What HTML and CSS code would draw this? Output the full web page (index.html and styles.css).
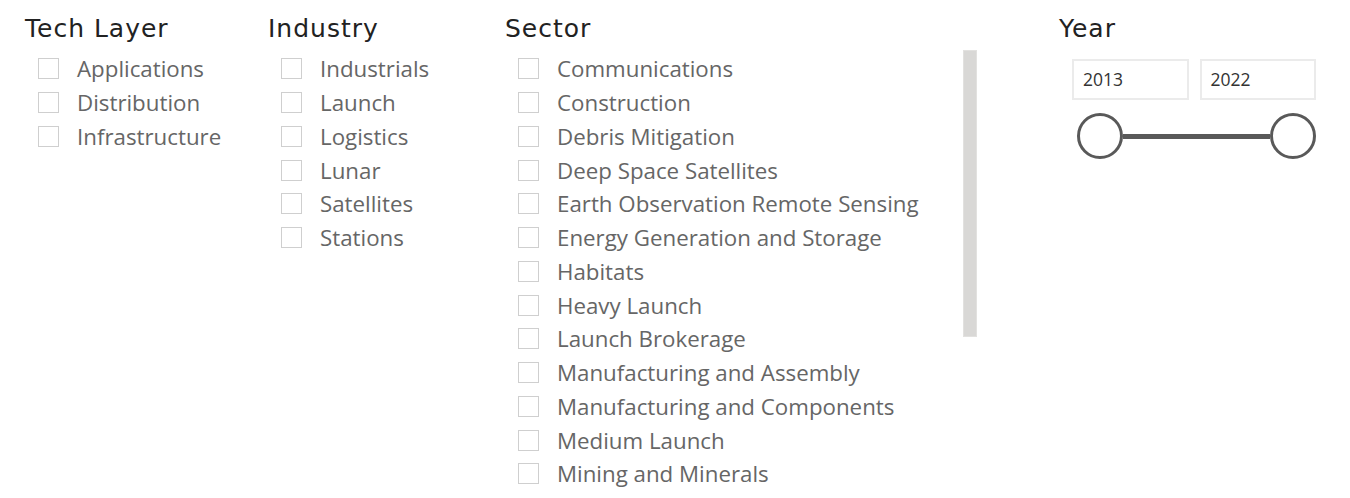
FILE: index.html
```html
<!DOCTYPE html>
<html>
<head>
<meta charset="utf-8">
<link rel="stylesheet" href="styles.css">
</head>
<body>
<div class="page">
  <section class="slicer tech">
    <h2 class="title">Tech Layer</h2>
    <ul class="items">
      <li><span class="box"></span>Applications</li>
      <li><span class="box"></span>Distribution</li>
      <li><span class="box"></span>Infrastructure</li>
    </ul>
  </section>
  <section class="slicer industry">
    <h2 class="title">Industry</h2>
    <ul class="items">
      <li><span class="box"></span>Industrials</li>
      <li><span class="box"></span>Launch</li>
      <li><span class="box"></span>Logistics</li>
      <li><span class="box"></span>Lunar</li>
      <li><span class="box"></span>Satellites</li>
      <li><span class="box"></span>Stations</li>
    </ul>
  </section>
  <section class="slicer sector">
    <h2 class="title">Sector</h2>
    <div class="scrollwrap">
      <ul class="items">
        <li><span class="box"></span>Communications</li>
        <li><span class="box"></span>Construction</li>
        <li><span class="box"></span>Debris Mitigation</li>
        <li><span class="box"></span>Deep Space Satellites</li>
        <li><span class="box"></span>Earth Observation Remote Sensing</li>
        <li><span class="box"></span>Energy Generation and Storage</li>
        <li><span class="box"></span>Habitats</li>
        <li><span class="box"></span>Heavy Launch</li>
        <li><span class="box"></span>Launch Brokerage</li>
        <li><span class="box"></span>Manufacturing and Assembly</li>
        <li><span class="box"></span>Manufacturing and Components</li>
        <li><span class="box"></span>Medium Launch</li>
        <li><span class="box"></span>Mining and Minerals</li>
      </ul>
      <div class="scrollbar"></div>
    </div>
  </section>
  <section class="slicer year">
    <h2 class="title">Year</h2>
    <div class="range">
      <div class="inputs">
        <div class="field">2013</div>
        <div class="field">2022</div>
      </div>
      <div class="track">
        <span class="knob"></span>
        <span class="bar"></span>
        <span class="knob"></span>
      </div>
    </div>
  </section>
</div>
</body>
</html>
```
FILE: styles.css
```css
html, body {
  margin: 0;
  padding: 0;
  background: #ffffff;
  overflow: hidden;
}
.page {
  display: flex;
  align-items: flex-start;
  height: 498px;
  overflow: hidden;
}
.title {
  margin: 0;
  font-family: "DejaVu Sans", sans-serif;
  font-weight: normal;
  font-size: 25px;
  letter-spacing: 1px;
  line-height: 30px;
  color: #222222;
  padding-top: 14px;
  height: 30px;
}
.items {
  list-style: none;
  margin: 0;
  padding: 0;
  font-family: "Open Sans", sans-serif;
  font-size: 22.3px;
  color: #666666;
}
.items li {
  display: flex;
  align-items: center;
  height: 33.75px;
  white-space: nowrap;
}
.box {
  width: 21px;
  height: 21px;
  border: 1px solid #cfcfcf;
  box-sizing: border-box;
  margin-right: 18px;
  flex: none;
}
.tech {
  margin-left: 25px;
  width: 243px;
}
.tech .items, .industry .items {
  margin-left: 13px;
  margin-top: 8px;
}
.industry {
  width: 237px;
}
.sector {
  width: 554px;
}
.scrollwrap {
  display: flex;
  align-items: flex-start;
  margin-left: 13px;
  margin-top: 6px;
}
.scrollwrap .items {
  width: 445px;
  margin-top: 2px;
}
.scrollbar {
  width: 14px;
  height: 287px;
  background: #d9d8d6;
  border: 1px solid #e2e1df;
  box-sizing: border-box;
}
.year {
  width: 260px;
}
.range {
  margin-left: 13px;
  margin-top: 15px;
  width: 244px;
}
.inputs {
  display: flex;
  gap: 11px;
}
.field {
  flex: 1;
  height: 41px;
  border: 2px solid #ebebeb;
  box-sizing: border-box;
  font-family: "Open Sans", sans-serif;
  font-size: 17.5px;
  color: #333333;
  padding-left: 9px;
  line-height: 37px;
}
.track {
  display: flex;
  align-items: center;
  margin-top: 13px;
  margin-left: 5px;
}
.knob {
  width: 46px;
  height: 46px;
  border: 3px solid #595959;
  border-radius: 50%;
  box-sizing: border-box;
  background: #ffffff;
  flex: none;
}
.bar {
  flex: 1;
  height: 5px;
  background: #595959;
}
```
